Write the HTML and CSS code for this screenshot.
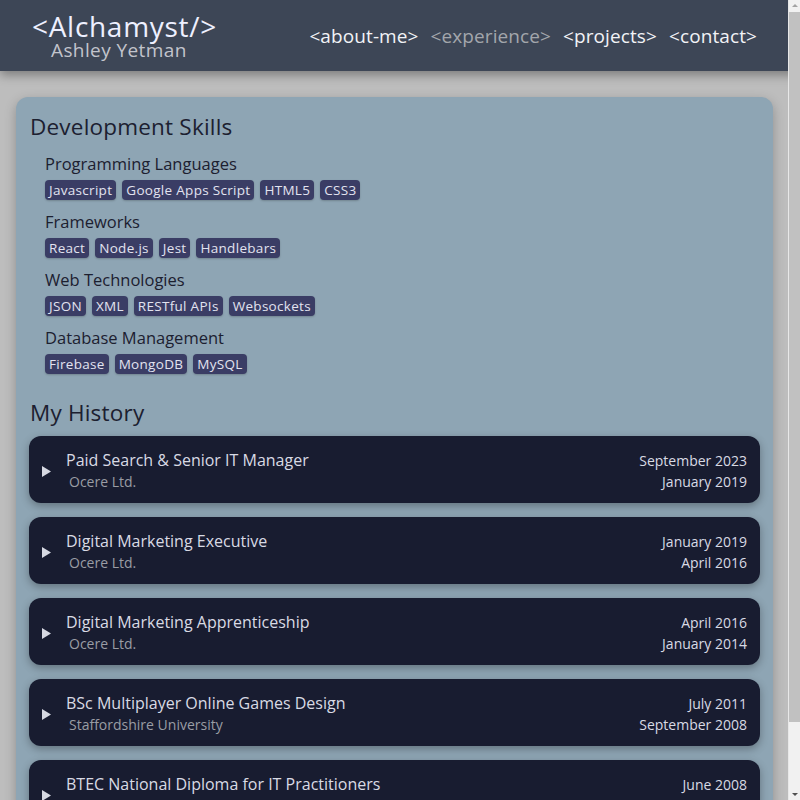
FILE: index.html
```html
<!DOCTYPE html>
<html lang="en">
<head>
<meta charset="utf-8">
<title>Alchamyst - Experience</title>
<link rel="stylesheet" href="styles.css">
</head>
<body>
<header class="site-header">
  <div class="brand">
    <div class="brand-title">&lt;Alchamyst/&gt;</div>
    <div class="brand-sub">Ashley Yetman</div>
  </div>
  <nav class="nav">
    <a class="nav-link">&lt;about-me&gt;</a>
    <a class="nav-link active">&lt;experience&gt;</a>
    <a class="nav-link">&lt;projects&gt;</a>
    <a class="nav-link">&lt;contact&gt;</a>
  </nav>
</header>
<main class="main">
  <section class="panel">
    <h2 class="section-title">Development Skills</h2>
    <div class="skill-group">
      <h3 class="skill-title">Programming Languages</h3>
      <div class="tags"><span class="tag">Javascript</span><span class="tag">Google Apps Script</span><span class="tag">HTML5</span><span class="tag">CSS3</span></div>
    </div>
    <div class="skill-group">
      <h3 class="skill-title">Frameworks</h3>
      <div class="tags"><span class="tag">React</span><span class="tag">Node.js</span><span class="tag">Jest</span><span class="tag">Handlebars</span></div>
    </div>
    <div class="skill-group">
      <h3 class="skill-title">Web Technologies</h3>
      <div class="tags"><span class="tag">JSON</span><span class="tag">XML</span><span class="tag">RESTful APIs</span><span class="tag">Websockets</span></div>
    </div>
    <div class="skill-group">
      <h3 class="skill-title">Database Management</h3>
      <div class="tags"><span class="tag">Firebase</span><span class="tag">MongoDB</span><span class="tag">MySQL</span></div>
    </div>
    <h2 class="section-title history-title">My History</h2>
    <div class="jobs">
      <div class="job">
        <svg class="arrow" width="9" height="11" viewBox="0 0 9 11"><polygon points="0,0 9,5.5 0,11" fill="#d6d8e2"/></svg>
        <div class="job-main"><div class="job-title">Paid Search &amp; Senior IT Manager</div><div class="job-org">Ocere Ltd.</div></div>
        <div class="job-dates"><div>September 2023</div><div>January 2019</div></div>
      </div>
      <div class="job">
        <svg class="arrow" width="9" height="11" viewBox="0 0 9 11"><polygon points="0,0 9,5.5 0,11" fill="#d6d8e2"/></svg>
        <div class="job-main"><div class="job-title">Digital Marketing Executive</div><div class="job-org">Ocere Ltd.</div></div>
        <div class="job-dates"><div>January 2019</div><div>April 2016</div></div>
      </div>
      <div class="job">
        <svg class="arrow" width="9" height="11" viewBox="0 0 9 11"><polygon points="0,0 9,5.5 0,11" fill="#d6d8e2"/></svg>
        <div class="job-main"><div class="job-title">Digital Marketing Apprenticeship</div><div class="job-org">Ocere Ltd.</div></div>
        <div class="job-dates"><div>April 2016</div><div>January 2014</div></div>
      </div>
      <div class="job">
        <svg class="arrow" width="9" height="11" viewBox="0 0 9 11"><polygon points="0,0 9,5.5 0,11" fill="#d6d8e2"/></svg>
        <div class="job-main"><div class="job-title">BSc Multiplayer Online Games Design</div><div class="job-org">Staffordshire University</div></div>
        <div class="job-dates"><div>July 2011</div><div>September 2008</div></div>
      </div>
      <div class="job">
        <svg class="arrow" width="9" height="11" viewBox="0 0 9 11"><polygon points="0,0 9,5.5 0,11" fill="#d6d8e2"/></svg>
        <div class="job-main"><div class="job-title">BTEC National Diploma for IT Practitioners</div><div class="job-org">Tamworth College</div></div>
        <div class="job-dates"><div>June 2008</div><div>September 2006</div></div>
      </div>
    </div>
  </section>
</main>
<div class="scrollbar" aria-hidden="true">
  <div class="sb-up"></div>
  <div class="sb-thumb"></div>
  <div class="sb-down"></div>
</div>
</body>
</html>
```

FILE: styles.css
```css
html { background: #bdbdbd; }
body {
  margin: 0;
  background: #bdbdbd;
  font-family: "Open Sans", "DejaVu Sans", sans-serif;
  color: #1c2030;
}

.site-header {
  height: 71px;
  background: #3d4656;
  box-shadow: 0 4px 10px rgba(0, 0, 0, 0.35);
  display: flex;
  align-items: center;
  justify-content: space-between;
  padding: 0 43px 0 32px;
  position: relative;
  z-index: 1;
}
.brand { display: flex; flex-direction: column; margin-top: -1px; }
.brand-title { font-size: 28px; line-height: 30px; color: #eef0ff; letter-spacing: 0.7px; }
.brand-sub { font-size: 19px; line-height: 18px; color: #c2c4cc; padding-left: 19px; letter-spacing: 0.4px; }

.nav { display: flex; gap: 12px; }
.nav-link { font-size: 19px; color: #f2f3f6; letter-spacing: 0.1px; }
.nav-link.active { color: #a3a6ac; }

.main { padding: 26px 27px 30px 16px; }

.panel {
  background: #8ea5b4;
  border-radius: 12px;
  padding: 14px 13px 20px 13px;
  box-shadow: 0 4px 12px rgba(0, 0, 0, 0.25);
}

.section-title {
  margin: 0 0 9px 1px;
  font-size: 22.5px;
  line-height: 32px;
  font-weight: 400;
  letter-spacing: 0.2px;
  color: #1c2030;
}
.history-title { margin-top: 23px; margin-bottom: 7px; }

.skill-group { padding-left: 16px; margin-bottom: 10px; }
.skill-title {
  margin: 0 0 4px 0;
  font-size: 16.5px;
  line-height: 24px;
  font-weight: 400;
  color: #1c2030;
}
.tags { display: flex; gap: 6px; flex-wrap: wrap; }
.tag {
  background: #3a3d65;
  color: #e2e3f0;
  font-size: 13.5px;
  line-height: 20px;
  letter-spacing: 0.3px;
  padding: 0 4px;
  border-radius: 4px;
  box-shadow: 0 1px 2px rgba(0, 0, 0, 0.2);
}

.jobs { display: flex; flex-direction: column; gap: 14px; }
.job {
  background: #181c30;
  border-radius: 12px;
  height: 67px;
  box-sizing: border-box;
  padding: 2px 13px 0 13px;
  display: flex;
  align-items: center;
  box-shadow: 0 3px 8px rgba(0, 0, 0, 0.3);
}
.arrow { flex: none; margin: 2px 15px 0 0; }
.job-main { flex: 1; }
.job-title { font-size: 16px; line-height: 21px; color: #d8dae4; }
.job-org { font-size: 14px; line-height: 21px; color: #9a9ca4; padding-left: 3px; }
.job-dates { text-align: right; font-size: 14px; line-height: 21px; color: #d8dae4; }

.scrollbar {
  position: fixed;
  top: 0;
  right: 0;
  width: 12px;
  height: 100vh;
  background: #f1f1f1;
  border-left: 1px solid #e8e8e8;
  box-sizing: border-box;
  display: flex;
  flex-direction: column;
  align-items: center;
  z-index: 10;
}
.sb-up, .sb-down { flex: none; height: 12px; width: 100%; position: relative; }
.sb-up::after, .sb-down::after {
  content: "";
  position: absolute;
  left: 3px;
  border-left: 3px solid transparent;
  border-right: 3px solid transparent;
}
.sb-up::after { top: 4px; border-bottom: 3px solid #a3a3a3; }
.sb-down::after { top: 5px; border-top: 3px solid #505050; }
.sb-thumb { flex: none; height: 710px; width: 100%; background: #c1c1c1; margin-bottom: auto; }
```
